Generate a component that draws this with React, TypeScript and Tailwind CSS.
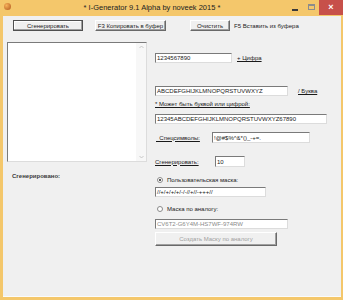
import React from "react";

const sunken =
  "border border-t-[#7a7a7a] border-l-[#7a7a7a] border-b-[#dcdcdc] border-r-[#dcdcdc] bg-white";

function Input({ w, h = 10, value, gray = false }: { w: number; h?: number; value: string; gray?: boolean }) {
  return (
    <div
      className={`${sunken} flex items-center pl-[1px] overflow-hidden whitespace-nowrap leading-none ${gray ? "text-[#8a8a8a]" : "text-[#1a1a1a]"}`}
      style={{ width: w, height: h }}
    >
      {value}
    </div>
  );
}

function Radio({ checked }: { checked: boolean }) {
  return (
    <div className="w-[6px] h-[6px] rounded-full border border-[#8a8a8a] bg-white flex items-center justify-center">
      {checked && <div className="w-[2px] h-[2px] rounded-full bg-[#222]" />}
    </div>
  );
}

export default function App() {
  return (
    <div className="w-[343px] h-[300px] bg-[#f4c76b] flex flex-col font-['Liberation_Sans',Arial,sans-serif] text-[6px] text-[#1a1a1a] overflow-hidden">
      {/* Title bar */}
      <div className="h-[16px] flex items-start relative shrink-0">
        <div className="ml-[4px] mt-[3px] w-[7px] h-[7px] rounded-full bg-[radial-gradient(circle_at_35%_35%,#f7b25a,#b0561c)]" />
        <div className="flex-1 text-center text-[7.5px] leading-[16px] text-[#222] pl-[6px]">
          * I-Generator 9.1 Alpha by noveek 2015 *
        </div>
        <div className="flex items-start">
          <div className="w-[16px] h-[15px] flex items-center justify-center">
            <div className="w-[6px] h-[2px] bg-[#3a3a3a] mt-[4px]" />
          </div>
          <div className="w-[16px] h-[15px] flex items-center justify-center">
            <div className="w-[7px] h-[6px] border border-[#8c8c8c] border-t-2 mb-[2px]" />
          </div>
          <div className="w-[24px] h-[15px] bg-[#c7504a] flex items-center justify-center text-white text-[9px] leading-none font-bold">
            ×
          </div>
        </div>
      </div>

      {/* Client */}
      <div className="flex-1 ml-[3px] mr-[2px] mb-[3px] bg-[#f0f0f0] border-b border-[#fbfbfb] flex flex-col">
        {/* Top buttons */}
        <div className="flex items-center pl-[10px] pt-[4px]">
          <div className="w-[70px] h-[11px] border border-[#505050] bg-[#f0f0f0] flex items-center justify-center leading-none shadow-[inset_-1px_-1px_0_#a0a0a0,inset_1px_1px_0_#ffffff]">
            Сгенерировать
          </div>
          <div className="ml-[12px] w-[71px] h-[11px] border border-t-white border-l-white border-b-[#696969] border-r-[#696969] bg-[#f0f0f0] flex items-center justify-center leading-none shadow-[inset_-1px_-1px_0_#a0a0a0]">
            F3 Копировать в буфер
          </div>
          <div className="ml-[24px] w-[40px] h-[11px] border border-t-white border-l-white border-b-[#696969] border-r-[#696969] bg-[#f0f0f0] flex items-center justify-center leading-none shadow-[inset_-1px_-1px_0_#a0a0a0]">
            Очистить
          </div>
          <div className="ml-[4px] leading-none">F5 Вставить из буфера</div>
        </div>

        {/* Body */}
        <div className="flex mt-[11px]">
          {/* Left column */}
          <div className="ml-[4px] w-[140px] flex flex-col">
            <div className={`${sunken} h-[120px] flex justify-end`}>
              <div className="w-[10px] h-full bg-[#f7f7f7] flex flex-col items-center justify-between py-[2px]">
                <svg width="5" height="4" viewBox="0 0 5 4">
                  <path d="M0.5 3 L2.5 1 L4.5 3" fill="none" stroke="#bdbdbd" strokeWidth="0.8" />
                </svg>
                <svg width="5" height="4" viewBox="0 0 5 4">
                  <path d="M0.5 1 L2.5 3 L4.5 1" fill="none" stroke="#bdbdbd" strokeWidth="0.8" />
                </svg>
              </div>
            </div>
            <div className="mt-[10px] pl-[5px] leading-[8px] font-bold text-[#3a3a3a]">Сгенерировано:</div>
          </div>

          {/* Right column */}
          <div className="ml-[8px] flex flex-col">
            <div className="mt-[11px] flex items-center">
              <Input w={77} value="1234567890" />
              <span className="ml-[5px] underline leading-none">+ Цифра</span>
            </div>
            <div className="mt-[23px] flex items-center">
              <Input w={133} value="ABCDEFGHIJKLMNOPQRSTUVWXYZ" />
              <span className="ml-[10px] underline leading-none">/ Буква</span>
            </div>
            <div className="mt-[4px] leading-[8px] underline">* Может быть буквой или цифрой:</div>
            <div className="mt-[6px]">
              <Input w={172} value="12345ABCDEFGHIJKLMNOPQRSTUVWXYZ67890" />
            </div>
            <div className="mt-[8px] flex items-center">
              <span className="ml-[1px] w-[56px] underline leading-none whitespace-pre">{"  Спецсимволы:"}</span>
              <Input w={98} h={11} value="!@#$%^&*()_-+=." />
            </div>
            <div className="mt-[13px] flex items-center">
              <span className="w-[60px] underline leading-none">Сгенерировать:</span>
              <Input w={30} h={11} value="10" />
            </div>
            <div className="mt-[9px] h-[8px] flex items-center">
              <div className="ml-[2px]">
                <Radio checked />
              </div>
              <span className="ml-[4px] leading-none">Пользовательская маска:</span>
            </div>
            <div className="mt-[3px]">
              <Input w={111} value="//+/+/+/+/-/-//+//-+++//" />
            </div>
            <div className="mt-[8px] h-[8px] flex items-center">
              <div className="ml-[2px]">
                <Radio checked={false} />
              </div>
              <span className="ml-[4px] leading-none">Маска по аналогу:</span>
            </div>
            <div className="mt-[6px]">
              <Input w={133} value="CV6T2-G6Y4M-HS7WF-974RW" gray />
            </div>
            <div className="mt-[3px] w-[122px] h-[14px] border border-t-white border-l-white border-b-[#696969] border-r-[#696969] shadow-[inset_-1px_-1px_0_#a0a0a0] flex items-center justify-center text-[#a0a0a0] leading-none">
              Создать Маску по аналогу
            </div>
          </div>
        </div>
      </div>
    </div>
  );
}
